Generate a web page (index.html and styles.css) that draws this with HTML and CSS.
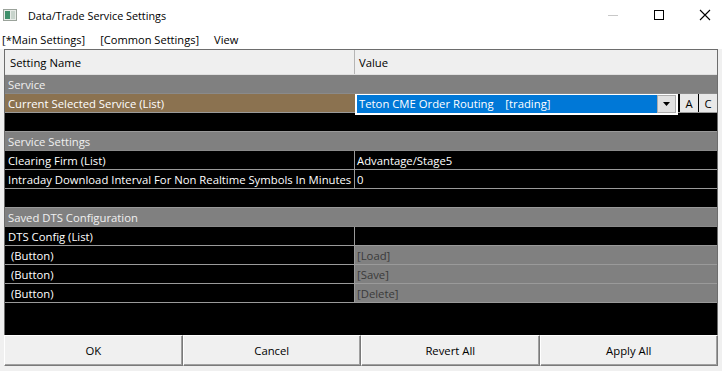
FILE: index.html
```html
<!DOCTYPE html>
<html lang="en">
<head>
  <meta charset="utf-8">
  <title>Data/Trade Service Settings</title>
  <link rel="stylesheet" href="styles.css">
</head>
<body>
  <div class="window">
    <!-- Title bar -->
    <div class="titlebar">
      <svg class="app-icon" width="14" height="12" viewBox="0 0 14 12">
        <rect x="0.5" y="0.5" width="13" height="11" fill="#e8ece8" stroke="#9aa29a"/>
        <rect x="2" y="2" width="5" height="8" fill="#3f8f6a"/>
        <rect x="8" y="2" width="4" height="8" fill="#c8d4cc"/>
      </svg>
      <span class="title">Data/Trade Service Settings</span>
      <div class="win-controls">
        <svg width="12" height="12" viewBox="0 0 12 12"><line x1="1" y1="6.5" x2="11" y2="6.5" stroke="#c8c8c8" stroke-width="1"/></svg>
        <svg width="12" height="12" viewBox="0 0 12 12"><rect x="1.5" y="1.5" width="9" height="9" fill="none" stroke="#000" stroke-width="1"/></svg>
        <svg width="12" height="12" viewBox="0 0 12 12"><path d="M1 1 L11 11 M11 1 L1 11" stroke="#000" stroke-width="1.1"/></svg>
      </div>
    </div>

    <!-- Menu -->
    <div class="menubar">
      <span>[*Main Settings]</span>
      <span>[Common Settings]</span>
      <span>View</span>
    </div>

    <!-- Settings grid -->
    <div class="grid">
      <div class="row header">
        <div class="cell name">Setting Name</div>
        <div class="cell value">Value</div>
      </div>

      <div class="row group">Service</div>
      <div class="row selected">
        <div class="cell name">Current Selected Service (List)</div>
        <div class="cell value combo-cell">
          <div class="combo">
            <span class="combo-text">Teton CME Order Routing &nbsp;&nbsp;&nbsp;[trading]</span>
            <span class="combo-arrow"><svg width="7" height="4" viewBox="0 0 7 4"><path d="M0 0 H7 L3.5 4 Z" fill="#000"/></svg></span>
          </div>
          <span class="mini-btn">A</span>
          <span class="mini-btn">C</span>
        </div>
      </div>
      <div class="row empty"></div>

      <div class="row group">Service Settings</div>
      <div class="row">
        <div class="cell name">Clearing Firm (List)</div>
        <div class="cell value">Advantage/Stage5</div>
      </div>
      <div class="row">
        <div class="cell name">Intraday Download Interval For Non Realtime Symbols In Minutes</div>
        <div class="cell value">0</div>
      </div>
      <div class="row empty"></div>

      <div class="row group">Saved DTS Configuration</div>
      <div class="row">
        <div class="cell name">DTS Config (List)</div>
        <div class="cell value"></div>
      </div>
      <div class="row">
        <div class="cell name">&nbsp;(Button)</div>
        <div class="cell value button-value">[Load]</div>
      </div>
      <div class="row">
        <div class="cell name">&nbsp;(Button)</div>
        <div class="cell value button-value">[Save]</div>
      </div>
      <div class="row">
        <div class="cell name">&nbsp;(Button)</div>
        <div class="cell value button-value">[Delete]</div>
      </div>
      <div class="filler"></div>
    </div>

    <!-- Bottom buttons -->
    <div class="buttons">
      <button>OK</button>
      <button>Cancel</button>
      <button>Revert All</button>
      <button>Apply All</button>
    </div>
  </div>
</body>
</html>
```

FILE: styles.css
```css
body {
  margin: 0;
  background-color: #f0f0f0;
  font-family: "Open Sans", "Noto Sans", sans-serif;
  font-size: 11.3px;
  color: #000;
}

.window {
  width: 722px;
  height: 371px;
  display: flex;
  flex-direction: column;
  background-color: #f0f0f0;
}

.titlebar {
  height: 30px;
  background-color: #fff;
  display: flex;
  align-items: center;
  padding-left: 3px;
}

.app-icon {
  margin-right: 11px;
}

.title {
  font-size: 10.8px;
  flex: 1;
}

.win-controls {
  display: flex;
  gap: 34px;
  padding-right: 11px;
}

.menubar {
  height: 19px;
  display: flex;
  align-items: center;
  gap: 15px;
  padding-left: 2px;
  background-color: #fff;
  font-size: 11.1px;
}

.grid {
  margin: 0 4px;
  height: 285px;
  border: 1px solid #6d6d6d;
  border-bottom: none;
  background-color: #000;
  display: flex;
  flex-direction: column;
  color: #fff;
}

.row {
  height: 19px;
  display: flex;
  border-bottom: 1px solid #9a9a9a;
  box-sizing: border-box;
  flex-shrink: 0;
}

.cell {
  display: flex;
  align-items: center;
  padding-left: 3px;
  white-space: nowrap;
  box-sizing: border-box;
}

.cell.name {
  width: 350px;
  border-right: 1px solid #9a9a9a;
  overflow: hidden;
}

.cell.value {
  flex: 1;
  padding-left: 2px;
}

.header {
  height: 25px;
  background-color: #efefef;
  color: #000;
  border-bottom: 1px solid #e0e0e0;
}

.header .cell.name {
  border-right-color: #b5b5b5;
  padding-left: 5px;
}

.header .cell.value {
  padding-left: 4px;
}

.group {
  background-color: #808080;
  color: #f0f0f0;
  align-items: center;
  padding-left: 3px;
  border-bottom-color: #8a8a8a;
}

.selected {
  background-color: #8b7250;
}

.selected .cell.name {
  border-right: none;
}

.combo-cell {
  padding-left: 0;
  background-color: #000;
  align-items: flex-start;
}

.combo-cell.value {
  padding-left: 0;
}

.combo {
  width: 323px;
  height: 21px;
  box-sizing: border-box;
  border: 1px solid #fff;
  border-top: none;
  background-color: #fff;
  display: flex;
  padding: 1px;
}

.combo-text {
  flex: 1;
  background-color: #0078d7;
  color: #fff;
  padding-left: 2px;
  line-height: 17px;
}

.combo-arrow {
  width: 19px;
  background-color: #e1e1e1;
  border: 1px solid #adadad;
  box-sizing: border-box;
  display: flex;
  align-items: center;
  justify-content: center;
}

.mini-btn {
  width: 18px;
  height: 18px;
  margin-left: 1px;
  background-color: #e8e8e8;
  color: #000;
  display: flex;
  align-items: center;
  justify-content: center;
}

.mini-btn:first-of-type {
  margin-left: 2px;
}

.button-value {
  background-color: #808080;
  color: #3a3a3a;
}

.filler {
  flex: 1;
}

.buttons {
  display: flex;
  margin: 0 4px;
  height: 31px;
}

.buttons button {
  flex: 1;
  font-family: inherit;
  font-size: 11.3px;
  background-color: #f0f0f0;
  border: 1px solid #7a7a7a;
  border-top-color: #fff;
  border-left-color: #fff;
  box-shadow: inset -1px -1px 0 #a0a0a0;
  padding: 0;
}
```
